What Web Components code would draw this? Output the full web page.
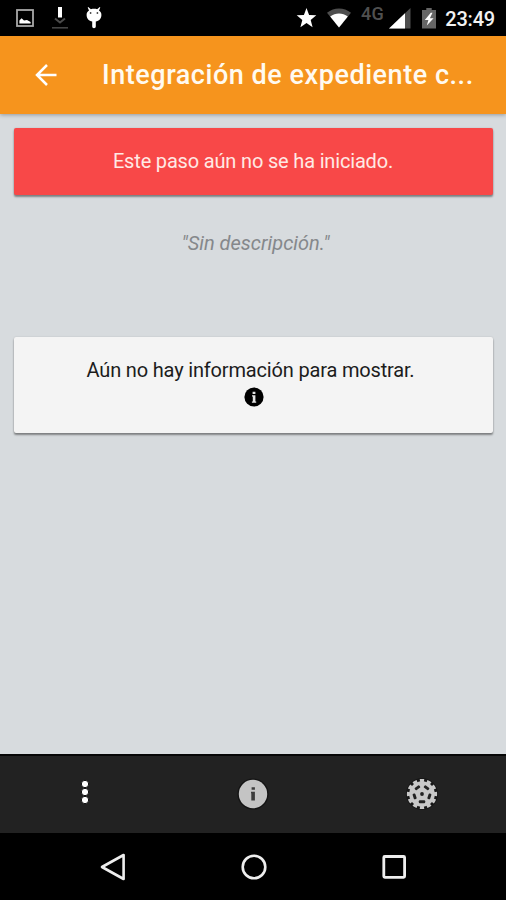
<!DOCTYPE html>
<html lang="es">
<head>
<meta charset="utf-8">
<title>Integración de expediente</title>
<style>
  html, body {
    margin: 0;
    height: 100%;
    overflow: hidden;
  }
</style>
</head>
<body>
<step-page></step-page>

<script>
const ICONS = {
  image: `<svg width="18" height="18" viewBox="0 0 18 18">
    <rect x="1" y="1" width="16" height="16" fill="none" stroke="#a8a8a8" stroke-width="1.8"/>
    <path d="M3.4 14.6v-3.2l2.2-2.2 2.4 2.4 3-.6 3.6 2v1.6z" fill="#fff"/></svg>`,
  download: `<svg width="16" height="22" viewBox="0 0 16 22">
    <path d="M6 0h4v10.500H6z" fill="#fff"/>
    <path d="M3 11.5l5 4 5-4" fill="none" stroke="#4a4a4a" stroke-width="2"/>
    <path d="M0 20h16v1.6H0z" fill="#444"/></svg>`,
  debug: `<svg width="16" height="22" viewBox="0 0 16 22">
    <path d="M2.2 0l2.700 2.200c1.900-.6 4.300-.6 6.200 0L13.800 0l.5.6-1.300 2.800c1.800 1.200 2.400 2.400 2.400 4.600 0 3.800-2.400 6-5.600 6.600v4.800a1.800 1.800 0 0 1-3.600 0v-4.800C3 14 .6 11.800.6 8c0-2.200.6-3.400 2.400-4.600L1.700.6z" fill="#fff"/>
    <circle cx="4.600" cy="6" r=".9" fill="#444"/><circle cx="11.400" cy="6" r=".9" fill="#444"/></svg>`,
  star: `<svg width="21" height="20" viewBox="0 0 20 20">
    <path d="M10 0l2.600 6.900 7.200.4-5.600 4.600 1.900 7.300L10 15.100l-6.100 4.100 1.900-7.300L.2 7.300l7.200-.4z" fill="#fff"/></svg>`,
  wifi: `<svg width="24" height="20" viewBox="0 0 24 20">
    <path d="M12 19.500L0 4.800C7-1 17-1 24 4.800z" fill="#4e4e4e"/>
    <path d="M12 19.500L3.200 8.600c5.200-4.200 12.400-4.200 17.600 0z" fill="#fff"/></svg>`,
  signal: `<svg width="22" height="21" viewBox="0 0 22 21">
    <path d="M0 20.500L21.500 0v20.500z" fill="#4e4e4e"/>
    <path d="M0 20.500L16 5.200v15.300z" fill="#fff"/></svg>`,
  battery: `<svg width="14" height="21" viewBox="0 0 14 21">
    <path d="M4.300 0h5.400v2H14v18.500H0V2h4.300z" fill="#666"/>
    <path d="M8.800 4.800L2.800 12h3.600l-1.600 5.600 6.800-7.300H7.900l2.600-5.500z" fill="#fff"/></svg>`,
  back: `<svg width="24" height="24" viewBox="0 0 24 24" fill="none" stroke="#fff" stroke-width="2.500">
    <path d="M22.500 12H3M13 2L3 12l10 10"/></svg>`,
  info: `<svg width="20" height="20" viewBox="0 0 20 20">
    <circle cx="10" cy="10" r="9.600" fill="#000"/>
    <path d="M8.600 4.700h2.800V7H8.600zM8 8.300h3.400v6.300h.8v1.200H7.900v-1.200h.9V9.500H8z" fill="#e4e4e4"/></svg>`,
  infoBar: `<svg width="32" height="32" viewBox="0 0 32 32">
    <circle cx="16" cy="16" r="15.600" fill="#141414"/>
    <circle cx="16" cy="16" r="14.200" fill="#c4c4c4"/>
    <path d="M14.600 9.300h3.300v2.500h-3.300zM14 13.700h3.900v8.900h-3.600v-7.400H14z" fill="#3c3c3c"/></svg>`,
  more: `<svg width="12" height="26" viewBox="0 0 12 26" fill="#fff" stroke="#111" stroke-width="1">
    <circle cx="6" cy="5" r="3.700"/><circle cx="6" cy="13" r="3.700"/><circle cx="6" cy="21" r="3.700"/></svg>`,
  gear: `<svg width="34" height="34" viewBox="-17 -17 34 34">
    <circle r="16" fill="#171717"/>
    <circle r="12.800" fill="#c8c8c8"/>
    <circle r="13.500" fill="none" stroke="#c8c8c8" stroke-width="3.200" pathLength="120" stroke-dasharray="6 4" stroke-dashoffset="3"/>
    <circle r="1.900" fill="#222"/>
    <g fill="#222">
      <rect x="-3.200" y="6.300" width="6.400" height="2.900" rx="1"/>
      <rect x="-2.900" y="6.300" width="5.800" height="2.900" rx="1" transform="rotate(72)"/>
      <rect x="-2.900" y="6.300" width="5.800" height="2.900" rx="1" transform="rotate(144)"/>
      <rect x="-2.900" y="6.300" width="5.800" height="2.900" rx="1" transform="rotate(216)"/>
      <rect x="-2.900" y="6.300" width="5.800" height="2.900" rx="1" transform="rotate(288)"/>
    </g></svg>`,
  navBack: `<svg width="28" height="28" viewBox="0 0 28 28" fill="none" stroke="#eee" stroke-width="2.600" stroke-linejoin="round">
    <path d="M24.600 2v24L3 14z"/></svg>`,
  navHome: `<svg width="28" height="28" viewBox="0 0 28 28" fill="none" stroke="#eee" stroke-width="2.600">
    <circle cx="14" cy="14" r="11.300"/></svg>`,
  navRecent: `<svg width="28" height="28" viewBox="0 0 28 28" fill="none" stroke="#eee" stroke-width="2.800">
    <rect x="3.800" y="3.500" width="20.800" height="20.800" rx="1"/></svg>`
};

class AppIcon extends HTMLElement {
  constructor() {
    super();
    this.attachShadow({ mode: "open" });
  }

  connectedCallback() {
    this.shadowRoot.innerHTML = `
      <style>
        :host { display: block; flex: none; }
        svg { display: block; }
      </style>
      ${ICONS[this.getAttribute("name")]}`;
  }
}
customElements.define("app-icon", AppIcon);

class StatusBar extends HTMLElement {
  constructor() {
    super();
    this.attachShadow({ mode: "open" }).innerHTML = `
      <style>
        :host {
          display: flex;
          justify-content: space-between;
          box-sizing: border-box;
          height: 36px;
          padding: 0 11px 0 16px;
          background: #000;
          color: #f2f2f2;
        }
        .left, .right { display: flex; align-items: flex-start; }
        .left { gap: 18px; padding-top: 7px; }
        .left app-icon:first-child { margin-top: 2px; }
        .right { padding-top: 8px; }
        .net {
          margin: -5px 5px 0 10px;
          font-size: 18px;
          line-height: 21px;
          font-weight: 500;
          letter-spacing: .4px;
          color: #505050;
        }
        .time {
          margin-left: 9px;
          font-size: 20px;
          line-height: 22px;
          font-weight: 500;
          letter-spacing: -.2px;
        }
      </style>
      <div class="left">
        <app-icon name="image"></app-icon>
        <app-icon name="download"></app-icon>
        <app-icon name="debug"></app-icon>
      </div>
      <div class="right">
        <app-icon name="star"></app-icon>
        <app-icon name="wifi" style="margin-left: 10px"></app-icon>
        <span class="net">4G</span>
        <app-icon name="signal"></app-icon>
        <app-icon name="battery" style="margin-left: 11px"></app-icon>
        <span class="time">23:49</span>
      </div>`;
  }
}
customElements.define("status-bar", StatusBar);

class AppHeader extends HTMLElement {
  constructor() {
    super();
    this.attachShadow({ mode: "open" }).innerHTML = `
      <style>
        :host {
          display: flex;
          align-items: center;
          box-sizing: border-box;
          height: 78px;
          padding-left: 33.5px;
          background: #f6941d;
          color: #fffaf0;
          box-shadow: 0 1px 4px rgba(0, 0, 0, .3);
        }
        .title {
          margin-left: 44.5px;
          font-size: 27px;
          font-weight: 500;
          line-height: 36px;
          letter-spacing: .54px;
          white-space: nowrap;
        }
      </style>
      <app-icon name="back"></app-icon>
      <div class="title"><slot></slot></div>`;
  }
}
customElements.define("app-header", AppHeader);

class AppCard extends HTMLElement {
  constructor() {
    super();
    this.attachShadow({ mode: "open" }).innerHTML = `
      <style>
        :host {
          display: flex;
          flex-direction: column;
          align-items: center;
          box-sizing: border-box;
          padding-top: 20px;
          height: 96px;
          border-radius: 2px;
          background: #f4f4f4;
          color: #1c1c1c;
          font-size: 20px;
          line-height: 26px;
          letter-spacing: -.17px;
          box-shadow: 0 2px 2px rgba(0, 0, 0, .4), 0 0 2px rgba(0, 0, 0, .14);
        }
        :host([kind="danger"]) {
          height: 67px;
          background: #f84848;
          color: #ffe9e4;
        }
      </style>
      <slot></slot>`;
  }
}
customElements.define("app-card", AppCard);

class TabBar extends HTMLElement {
  constructor() {
    super();
    this.attachShadow({ mode: "open" }).innerHTML = `
      <style>
        :host {
          display: grid;
          grid-template-columns: repeat(3, 1fr);
          place-items: center;
          box-sizing: border-box;
          height: 79px;
          padding-left: 1px;
          border-top: 2px solid #060606;
          background: #222;
        }
        app-icon { margin-bottom: 1px; }
      </style>
      <app-icon name="more" style="margin-bottom: 6px"></app-icon>
      <app-icon name="infoBar"></app-icon>
      <app-icon name="gear"></app-icon>`;
  }
}
customElements.define("tab-bar", TabBar);

class NavBar extends HTMLElement {
  constructor() {
    super();
    this.attachShadow({ mode: "open" }).innerHTML = `
      <style>
        :host {
          display: flex;
          justify-content: center;
          align-items: center;
          gap: 112.5px;
          height: 67px;
          padding-left: 1px;
          background: #000;
        }
      </style>
      <app-icon name="navBack"></app-icon>
      <app-icon name="navHome"></app-icon>
      <app-icon name="navRecent"></app-icon>`;
  }
}
customElements.define("nav-bar", NavBar);

class StepPage extends HTMLElement {
  constructor() {
    super();
    this.attachShadow({ mode: "open" }).innerHTML = `
      <style>
        :host {
          display: flex;
          flex-direction: column;
          height: 900px;
          background: #d7dbde;
          font-family: Roboto, sans-serif;
        }
        main {
          flex: 1;
          padding: 14px 13px 0 14px;
        }
        .description {
          margin: 35px 0 81px;
          padding-left: 4px;
          text-align: center;
          font-size: 20px;
          line-height: 26px;
          font-style: italic;
          color: #85888b;
        }
        .message { margin-right: 6px; }
        .message.start { margin-right: 1px; }
      </style>
      <status-bar></status-bar>
      <app-header><span class="heading">Integración de expediente c...</span></app-header>
      <main>
        <app-card kind="danger"><span class="message start">Este paso aún no se ha iniciado.</span></app-card>
        <p class="description">"Sin descripción."</p>
        <app-card>
          <span class="message">Aún no hay información para mostrar.</span>
          <app-icon name="info" style="margin-top: 4px"></app-icon>
        </app-card>
      </main>
      <tab-bar></tab-bar>
      <nav-bar></nav-bar>`;
  }
}
customElements.define("step-page", StepPage);
</script>
</body>
</html>
